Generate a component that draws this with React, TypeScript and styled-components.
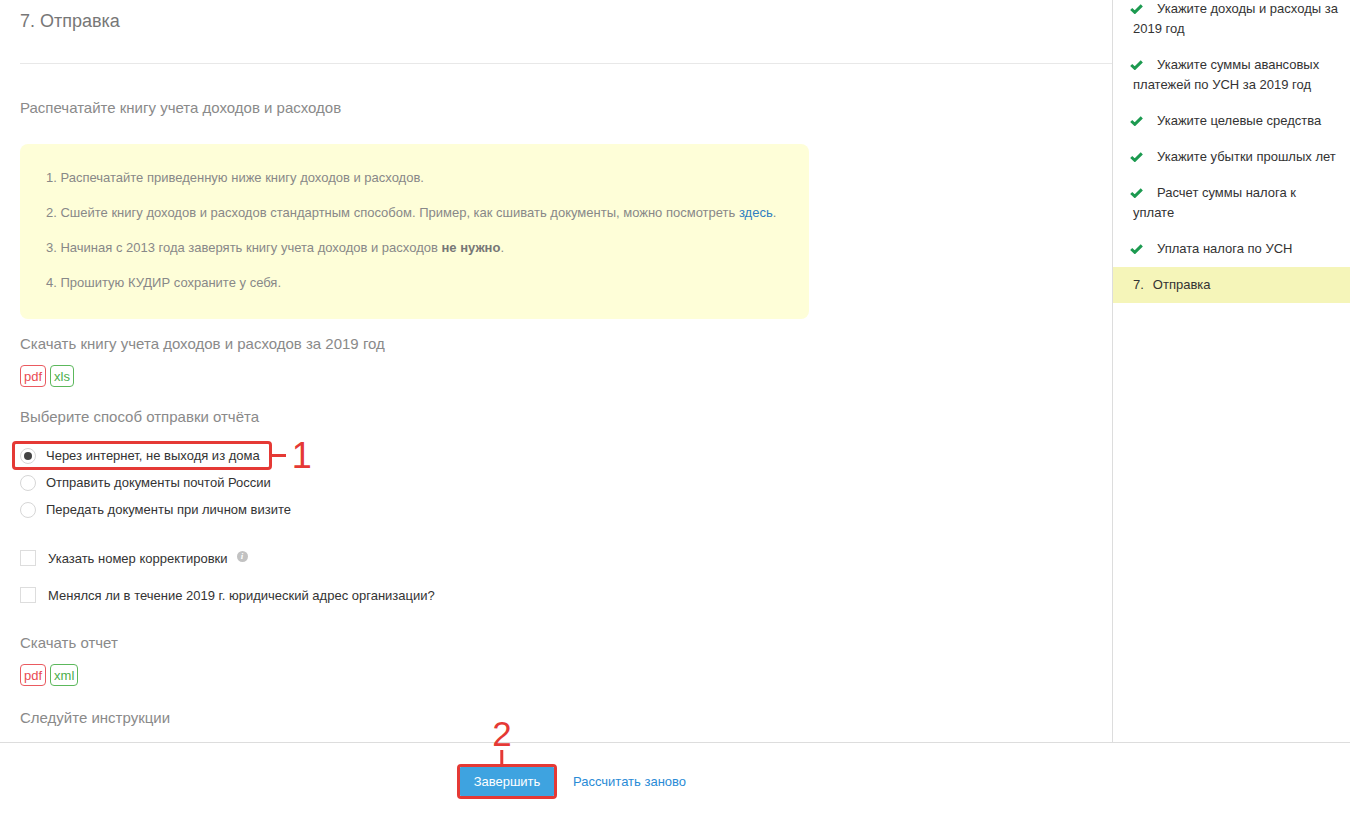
import styled, { createGlobalStyle } from "styled-components";

const GlobalStyle = createGlobalStyle`
  html, body {
    margin: 0;
    padding: 0;
    background: #ffffff;
    font-family: "Liberation Sans", Arial, sans-serif;
  }
  * {
    box-sizing: border-box;
  }
`;

const StyledPage = styled.div`
  width: 1350px;
  height: 817px;
  overflow: hidden;
  display: flex;
  flex-direction: column;
`;

const StyledTopRow = styled.div`
  display: flex;
  height: 743px;
  border-bottom: 1px solid #dddddd;
`;

const StyledMain = styled.div`
  width: 1112px;
  padding-left: 20px;
  overflow: hidden;
  display: flex;
  flex-direction: column;
`;

const StyledTitle = styled.h1`
  margin: 0;
  height: 64px;
  padding-top: 9px;
  font-size: 18px;
  line-height: 24px;
  font-weight: normal;
  color: #777777;
  border-bottom: 1px solid #e8e8e8;
`;

const StyledHeading = styled.h2<{ $top: number }>`
  margin: ${(p) => p.$top}px 0 0;
  font-size: 15px;
  line-height: 20px;
  font-weight: normal;
  color: #8a8a8a;
`;

const StyledNote = styled.ol`
  list-style: none;
  width: 789px;
  margin: 26px 0 0;
  padding: 24px 26px 26px;
  background: #fefed8;
  border-radius: 8px;
  display: flex;
  flex-direction: column;
  gap: 15px;
`;

const StyledNoteItem = styled.li`
  font-size: 13px;
  line-height: 20px;
  color: #888888;
  & b {
    color: #777777;
  }
  & a {
    color: #2f7fc1;
    text-decoration: none;
  }
`;

const StyledTags = styled.div<{ $top: number }>`
  display: flex;
  gap: 4px;
  margin-top: ${(p) => p.$top}px;
`;

const StyledTag = styled.span<{ $tone: "red" | "green" }>`
  height: 22px;
  padding: 0 3px;
  border: 1px solid ${(p) => (p.$tone === "red" ? "#ea5a60" : "#5cb85c")};
  border-radius: 4px;
  color: ${(p) => (p.$tone === "red" ? "#ea4a52" : "#4cae4c")};
  font-size: 13px;
  line-height: 21px;
`;

const StyledRadioList = styled.div`
  margin-top: 15px;
  display: flex;
  flex-direction: column;
`;

const StyledRadioRow = styled.label`
  position: relative;
  align-self: flex-start;
  display: flex;
  align-items: center;
  gap: 10px;
  height: 27px;
  font-size: 13px;
  color: #333333;
`;

const StyledRadio = styled.span<{ $checked?: boolean }>`
  width: 16px;
  height: 16px;
  border-radius: 50%;
  border: 1px solid #d6d6d6;
  background: #ffffff;
  display: flex;
  align-items: center;
  justify-content: center;
  &::after {
    content: "";
    display: ${(p) => (p.$checked ? "block" : "none")};
    width: 8px;
    height: 8px;
    border-radius: 50%;
    background: #444444;
  }
`;

const StyledFrame = styled.span`
  position: absolute;
  left: -8px;
  right: -12px;
  top: -1px;
  bottom: -1px;
  border: 3px solid #e53935;
  border-radius: 4px;
  pointer-events: none;
`;

const StyledMarker = styled.span`
  position: absolute;
  left: 100%;
  top: 50%;
  transform: translateY(-50%);
  display: flex;
  align-items: center;
  gap: 6px;
  color: #e53935;
  font-size: 36px;
  line-height: 36px;
  &::before {
    content: "";
    width: 17px;
    height: 3px;
    background: #e53935;
  }
`;

const StyledCheckList = styled.div`
  margin-top: 23px;
  display: flex;
  flex-direction: column;
  gap: 13px;
`;

const StyledCheckRow = styled.label`
  display: flex;
  align-items: center;
  height: 24px;
  gap: 12px;
  font-size: 13px;
  color: #333333;
`;

const StyledCheckbox = styled.span`
  width: 16px;
  height: 16px;
  border: 1px solid #dddddd;
  background: #ffffff;
`;

const StyledInfo = styled.span`
  width: 11px;
  height: 11px;
  margin-left: -3px;
  margin-top: -4px;
  border-radius: 50%;
  background: #c2c2c2;
  color: #ffffff;
  font-size: 9px;
  font-weight: bold;
  font-style: italic;
  line-height: 11px;
  text-align: center;
  font-family: "Liberation Serif", serif;
`;

const StyledSidebar = styled.aside`
  width: 238px;
  border-left: 1px solid #dddddd;
  overflow: hidden;
`;

const StyledSteps = styled.ul`
  list-style: none;
  margin: -9px 0 0;
  padding: 0;
`;

const StyledStep = styled.li<{ $active?: boolean }>`
  padding: 8px 10px 8px 20px;
  font-size: 13px;
  line-height: 20px;
  color: #333333;
  background: ${(p) => (p.$active ? "#f5f5b9" : "transparent")};
`;

const StyledStepNum = styled.span`
  margin-right: 9px;
`;

const StyledCheck = styled.svg`
  display: inline-block;
  width: 13px;
  height: 10px;
  margin-left: -3px;
  margin-right: 14px;
  vertical-align: -1px;
`;

const StyledFooter = styled.div`
  display: flex;
  align-items: center;
  gap: 16px;
  padding: 21px 0 0 457px;
`;

const StyledBtnFrame = styled.span`
  position: relative;
  display: inline-flex;
  border: 3px solid #e53935;
  border-radius: 4px;
`;

const StyledBtnMarker = styled.span`
  position: absolute;
  left: 50%;
  bottom: 100%;
  transform: translateX(-50%);
  margin-left: -5px;
  display: flex;
  flex-direction: column;
  align-items: center;
  color: #e53935;
  font-size: 35px;
  line-height: 30px;
  &::after {
    content: "";
    width: 3px;
    height: 17px;
    margin-top: 1px;
    background: #e53935;
  }
`;

const StyledBtn = styled.button`
  height: 29px;
  width: 94px;
  border: none;
  border-radius: 1px;
  background: #3ea3e0;
  color: #ffffff;
  font-family: "Liberation Sans", Arial, sans-serif;
  font-size: 13px;
  cursor: pointer;
`;

const StyledLink = styled.a`
  color: #2a8bd6;
  font-size: 13px;
  text-decoration: none;
`;

const steps = [
  "Укажите доходы и расходы за 2019 год",
  "Укажите суммы авансовых платежей по УСН за 2019 год",
  "Укажите целевые средства",
  "Укажите убытки прошлых лет",
  "Расчет суммы налога к уплате",
  "Уплата налога по УСН",
];

const CheckIcon = () => (
  <StyledCheck viewBox="0 0 13 10">
    <polyline points="1.2,5 4.8,8.3 11.8,1.4" fill="none" stroke="#1c9a50" strokeWidth="3" />
  </StyledCheck>
);

const App = () => {
  return (
    <StyledPage>
      <GlobalStyle />
      <StyledTopRow>
        <StyledMain>
          <StyledTitle>7. Отправка</StyledTitle>

          <StyledHeading $top={34}>Распечатайте книгу учета доходов и расходов</StyledHeading>
          <StyledNote>
            <StyledNoteItem>1. Распечатайте приведенную ниже книгу доходов и расходов.</StyledNoteItem>
            <StyledNoteItem>
              2. Сшейте книгу доходов и расходов стандартным способом. Пример, как сшивать документы, можно посмотреть{" "}
              <a href="#">здесь</a>.
            </StyledNoteItem>
            <StyledNoteItem>
              3. Начиная с 2013 года заверять книгу учета доходов и расходов <b>не нужно</b>.
            </StyledNoteItem>
            <StyledNoteItem>4. Прошитую КУДИР сохраните у себя.</StyledNoteItem>
          </StyledNote>

          <StyledHeading $top={15}>Скачать книгу учета доходов и расходов за 2019 год</StyledHeading>
          <StyledTags $top={11}>
            <StyledTag $tone="red">pdf</StyledTag>
            <StyledTag $tone="green">xls</StyledTag>
          </StyledTags>

          <StyledHeading $top={20}>Выберите способ отправки отчёта</StyledHeading>
          <StyledRadioList>
            <StyledRadioRow>
              <StyledRadio $checked />
              Через интернет, не выходя из дома
              <StyledFrame>
                <StyledMarker>1</StyledMarker>
              </StyledFrame>
            </StyledRadioRow>
            <StyledRadioRow>
              <StyledRadio />
              Отправить документы почтой России
            </StyledRadioRow>
            <StyledRadioRow>
              <StyledRadio />
              Передать документы при личном визите
            </StyledRadioRow>
          </StyledRadioList>

          <StyledCheckList>
            <StyledCheckRow>
              <StyledCheckbox />
              Указать номер корректировки
              <StyledInfo>i</StyledInfo>
            </StyledCheckRow>
            <StyledCheckRow>
              <StyledCheckbox />
              Менялся ли в течение 2019 г. юридический адрес организации?
            </StyledCheckRow>
          </StyledCheckList>

          <StyledHeading $top={26}>Скачать отчет</StyledHeading>
          <StyledTags $top={11}>
            <StyledTag $tone="red">pdf</StyledTag>
            <StyledTag $tone="green">xml</StyledTag>
          </StyledTags>

          <StyledHeading $top={22}>Следуйте инструкции</StyledHeading>
        </StyledMain>

        <StyledSidebar>
          <StyledSteps>
            {steps.map((s) => (
              <StyledStep key={s}>
                <CheckIcon />
                {s}
              </StyledStep>
            ))}
            <StyledStep $active>
              <StyledStepNum>7.</StyledStepNum>Отправка
            </StyledStep>
          </StyledSteps>
        </StyledSidebar>
      </StyledTopRow>

      <StyledFooter>
        <StyledBtnFrame>
          <StyledBtnMarker>2</StyledBtnMarker>
          <StyledBtn type="button">Завершить</StyledBtn>
        </StyledBtnFrame>
        <StyledLink href="#">Рассчитать заново</StyledLink>
      </StyledFooter>
    </StyledPage>
  );
};

export default App;
